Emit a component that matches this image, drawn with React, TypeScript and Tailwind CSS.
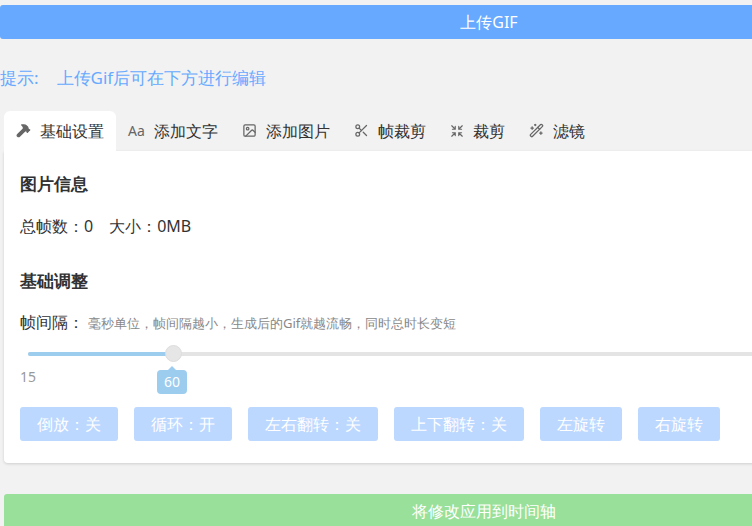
import { Hammer, ImageIcon, Scissors, Shrink, Wand2 } from "lucide-react";

const tabs = [
  { label: "基础设置", icon: <Hammer size={15} fill="#666" />, active: true },
  { label: "添加文字", icon: <span className="text-[14px]">Aa</span> },
  { label: "添加图片", icon: <ImageIcon size={15} /> },
  { label: "帧裁剪", icon: <Scissors size={15} /> },
  { label: "裁剪", icon: <Shrink size={14} /> },
  { label: "滤镜", icon: <Wand2 size={15} /> },
];

const buttons = ["倒放：关", "循环：开", "左右翻转：关", "上下翻转：关", "左旋转", "右旋转"];

export default function App() {
  return (
    <div className="h-[526px] w-[752px] overflow-hidden bg-[#f2f2f2] pt-[5px] text-[#333] [font-family:'Noto_Sans_CJK_SC','Noto_Sans',sans-serif]">
      <div className="flex h-[34px] w-[978px] items-center justify-center rounded-[3px] bg-[#66a9ff] text-[16px] text-white">
        上传GIF
      </div>
      <p className="mt-[26px] text-[17px] text-[#66a9ff]">
        提示:<span className="ml-[18px]">上传Gif后可在下方进行编辑</span>
      </p>
      <div className="ml-[4px] mt-[20px] w-[900px]">
        <div className="flex h-[40px]">
          {tabs.map((t) => (
            <div
              key={t.label}
              className={`flex items-center gap-[9px] px-[12px] text-[16px] ${t.active ? "rounded-t-[6px] bg-white" : ""}`}
            >
              <span className="flex text-[#666]">{t.icon}</span>
              {t.label}
            </div>
          ))}
        </div>
        <div className="h-[312px] rounded-b-[4px] bg-white px-[16px] pt-[20px] shadow-[0_1px_3px_rgba(0,0,0,0.15)]">
          <h3 className="text-[17px] font-bold text-[#303133]">图片信息</h3>
          <p className="mt-[18px] text-[16px]">
            总帧数：0<span className="ml-[16px]">大小：0MB</span>
          </p>
          <h3 className="mt-[30px] text-[17px] font-bold text-[#303133]">基础调整</h3>
          <p className="mt-[16px] text-[16px]">
            帧间隔：<span className="ml-[4px] text-[13px] text-[#888]">毫秒单位，帧间隔越小，生成后的Gif就越流畅，同时总时长变短</span>
          </p>
          <div className="relative mt-[18px] ml-[8px] h-[4px] rounded bg-[#e4e4e4]">
            <div className="h-[4px] w-[145px] rounded bg-[#9cccee]" />
            <div className="absolute left-[137px] top-[-7px] h-[17px] w-[17px] rounded-full border border-[#ddd] bg-[#e6e6e6]" />
            <div className="absolute left-[129px] top-[18px] flex h-[24px] w-[30px] items-center justify-center rounded-[4px] bg-[#9cccee] text-[14px] text-white">
              <span className="absolute top-[-4px] h-0 w-0 border-x-[4px] border-b-[4px] border-x-transparent border-b-[#9cccee]" />
              60
            </div>
          </div>
          <p className="mt-[10px] text-[14px] text-[#999]">15</p>
          <div className="mt-[20px] flex gap-[16px]">
            {buttons.map((b) => (
              <div key={b} className="flex h-[34px] items-center rounded-[3px] bg-[#bcd8ff] px-[17px] text-[16px] text-white">
                {b}
              </div>
            ))}
          </div>
        </div>
      </div>
      <div className="ml-[4px] mt-[31px] flex h-[34px] w-[960px] items-center justify-center rounded-[3px] bg-[#99e09a] text-[16px] text-white">
        将修改应用到时间轴
      </div>
    </div>
  );
}
